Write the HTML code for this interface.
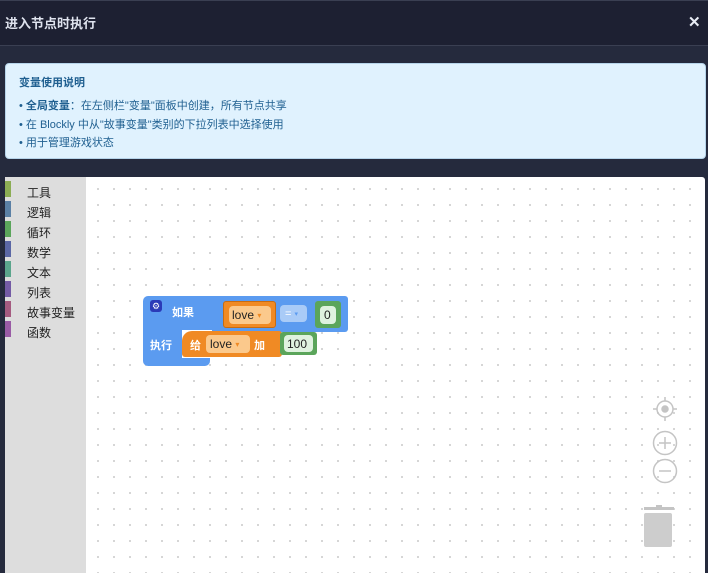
<!DOCTYPE html><html><head><meta charset="utf-8"><style>
*{margin:0;padding:0;box-sizing:border-box}
body{width:708px;height:573px;background:#252a3d;font-family:"Liberation Sans","Noto Sans CJK SC",sans-serif;position:relative;overflow:hidden}
.hd{position:absolute;left:0;top:0;width:708px;height:46px;background:#1d2032;border-bottom:1px solid #3a3f52;border-top:1px solid #3a3f52}
.hd .t{position:absolute;left:5px;top:12px;color:#dfe3ee;font-size:13px;font-weight:bold}
.hd .x{position:absolute;left:688px;top:12px;color:#e8ecf5;font-size:15px;font-weight:bold}
.info{position:absolute;left:5px;top:63px;width:701px;height:96px;background:#e0f2fe;border-radius:4px;border:1px solid #b6d4ea}
.info div{position:absolute;left:13px;color:#1f5f90;font-size:11px}
.ws{position:absolute;left:5px;top:177px;width:700px;height:396px;background-color:#fff;background-image:radial-gradient(circle,#cfcfcf 0.9px,transparent 1.2px);background-size:16px 16px;background-position:5px 4px;border-radius:3px 3px 0 0}
.fly{position:absolute;left:5px;top:177px;width:81px;height:396px;background:#dddddd}
.cat{position:absolute;left:5px;width:6px;height:16px}
.cl{position:absolute;left:27px;font-size:12px;color:#222}
.b{position:absolute}
.f{display:flex;align-items:center}
.tx{position:absolute;color:#fff;font-size:11px;font-weight:bold}
</style></head><body>
<div class="hd"><div class="t">进入节点时执行</div><div class="x">✕</div></div>
<div class="info">
<div style="top:10px;font-weight:bold">变量使用说明</div>
<div style="top:33px">• <b>全局变量</b>：在左侧栏"变量"面板中创建，所有节点共享</div>
<div style="top:52px">• 在 Blockly 中从"故事变量"类别的下拉列表中选择使用</div>
<div style="top:70px">• 用于管理游戏状态</div>
</div>
<div class="ws"></div>
<div class="fly"></div>
<div class="cat" style="top:181px;background:#8cad54"></div><div class="cl" style="top:184px">工具</div>
<div class="cat" style="top:201px;background:#5b80a5"></div><div class="cl" style="top:204px">逻辑</div>
<div class="cat" style="top:221px;background:#5ba55b"></div><div class="cl" style="top:224px">循环</div>
<div class="cat" style="top:241px;background:#5b67a5"></div><div class="cl" style="top:244px">数学</div>
<div class="cat" style="top:261px;background:#5ba58c"></div><div class="cl" style="top:264px">文本</div>
<div class="cat" style="top:281px;background:#745ba5"></div><div class="cl" style="top:284px">列表</div>
<div class="cat" style="top:301px;background:#a55b80"></div><div class="cl" style="top:304px">故事变量</div>
<div class="cat" style="top:321px;background:#995ba5"></div><div class="cl" style="top:324px">函数</div>
<div class="b" style="left:143px;top:296px;width:67px;height:70px;background:#5b9bf0;border-radius:5px"></div>
<div class="b" style="left:205px;top:296px;width:143px;height:36px;background:#5b9bf0;border-radius:0 3px 3px 0"></div>
<div class="b" style="left:182px;top:330px;width:30px;height:28px;background:#fff"></div>
<div class="b" style="left:150px;top:300px;width:12px;height:12px;background:#2a3ab8;border-radius:3px;color:#fff;font-size:9px;text-align:center;line-height:12px">⚙</div>
<div class="tx" style="left:172px;top:304px">如果</div>
<div class="tx" style="left:150px;top:337px">执行</div>
<div class="b" style="left:223px;top:301px;width:53px;height:27px;background:#f08a24;border-radius:3px;border:1px solid #c86c10"></div>
<div class="b f" style="left:229px;top:306px;width:42px;height:18px;background:#fbc98c;border-radius:4px;font-size:12px;color:#222;padding-left:3px">love&nbsp;<span style="color:#f08a24;font-size:8px">▾</span></div>
<div class="b f" style="left:280px;top:305px;width:27px;height:17px;background:#a9cbf7;border-radius:4px;font-size:11px;color:#fff;padding-left:5px">=&nbsp;<span style="font-size:7px;color:#5b9bf0">▾</span></div>
<div class="b" style="left:315px;top:301px;width:26px;height:27px;background:#5ba55b;border-radius:3px"></div>
<div class="b f" style="left:320px;top:306px;width:16px;height:18px;background:#dff2df;border-radius:4px;font-size:12px;color:#222;padding-left:4px">0</div>
<div class="b" style="left:182px;top:331px;width:100px;height:26px;background:#f08a24;border-radius:10px 3px 3px 3px"></div>
<div class="tx" style="left:190px;top:337px">给</div>
<div class="b f" style="left:206px;top:335px;width:44px;height:18px;background:#fbc98c;border-radius:4px;font-size:12px;color:#222;padding-left:4px">love&nbsp;<span style="color:#f08a24;font-size:8px">▾</span></div>
<div class="tx" style="left:254px;top:337px">加</div>
<div class="b" style="left:280px;top:332px;width:37px;height:23px;background:#5ba55b;border-radius:3px"></div>
<div class="b f" style="left:284px;top:335px;width:29px;height:17px;background:#dff2df;border-radius:4px;font-size:12px;color:#222;padding-left:3px">100</div>
<svg class="b" style="left:640px;top:395px" width="50" height="160" fill="none" stroke="#c4c4c4" stroke-width="1.5">
<circle cx="25" cy="14" r="8"/><circle cx="25" cy="14" r="3" fill="#c4c4c4"/><path d="M25 2v4M25 22v4M13 14h4M33 14h4"/>
<circle cx="25" cy="48" r="11.5"/><path d="M19 48h12M25 42v12"/>
<circle cx="25" cy="76" r="11.5"/><path d="M19 76h12"/>
<rect x="4" y="112" width="30" height="3" fill="#c4c4c4" stroke="none"/><rect x="16" y="110" width="6" height="3" fill="#c4c4c4" stroke="none"/>
<rect x="4" y="118" width="28" height="34" rx="2" fill="#cdcdcd" stroke="none"/>
</svg>
</body></html>
